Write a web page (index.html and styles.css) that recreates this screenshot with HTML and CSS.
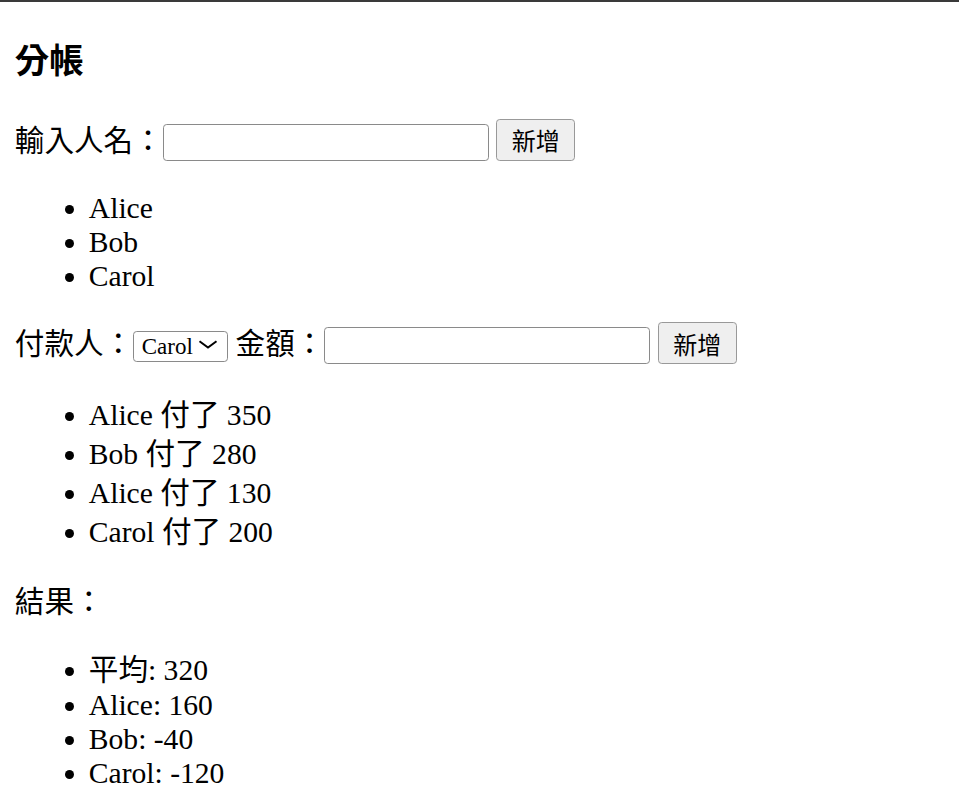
FILE: index.html
```html
<!DOCTYPE html>
<html lang="zh-Hant">
<head>
    <meta charset="UTF-8">
    <meta name="viewport" content="width=device-width, initial-scale=1.0">
    <title>分帳</title>
    <link rel="stylesheet" href="styles.css">
</head>
<body>
    <h3 class="title">分帳</h3>

    <!-- People -->
    <div class="row">輸入人名：<input type="text" class="field"> <button class="btn">新增</button></div>
    <ul class="list">
        <li>Alice</li>
        <li>Bob</li>
        <li>Carol</li>
    </ul>

    <!-- Payments -->
    <div class="row">付款人：<span class="select-wrap"><select class="picker">
            <option>Alice</option>
            <option>Bob</option>
            <option selected>Carol</option>
        </select><svg class="chevron" width="20" height="9" viewBox="0 0 20 9"><path d="M1.5 1.2 L10 7.6 L18.5 1.2" fill="none" stroke="#000" stroke-width="2"/></svg></span> 金額：<input type="number" class="field"> <button class="btn">新增</button></div>
    <ul class="list payments">
        <li>Alice 付了 350</li>
        <li>Bob 付了 280</li>
        <li>Alice 付了 130</li>
        <li>Carol 付了 200</li>
    </ul>

    <!-- Result -->
    <div class="result">結果：</div>
    <ul class="list results">
        <li class="avg">平均: 320</li>
        <li>Alice: 160</li>
        <li>Bob: -40</li>
        <li>Carol: -120</li>
    </ul>
</body>
</html>
```

FILE: styles.css
```css
html {
    border-top: 2px solid #3a3a3a;
}
body {
    margin: 0 14.8px 14.8px;
    font-family: "Liberation Serif", "Noto Sans CJK TC", serif;
    font-size: 29.6px;
    line-height: 34px;
    color: #000;
    background: white;
}
.title {
    font-size: 34.6px;
    line-height: 46px;
    margin: 36.4px 0 34.6px;
}
.row {
    margin: 0;
}
.field {
    width: 326px;
    height: 37px;
    box-sizing: border-box;
    padding: 1.8px 3.7px;
    border: 1.5px solid #8a8a8a;
    border-radius: 3.7px;
    font-size: 24.7px;
    font-family: "Liberation Sans", "Noto Sans CJK TC", sans-serif;
    -moz-appearance: textfield;
}
.field::-webkit-inner-spin-button,
.field::-webkit-outer-spin-button {
    -webkit-appearance: none;
    margin: 0;
}
.btn {
    height: 42px;
    width: 79px;
    padding: 0;
    border: 1.5px solid #999;
    border-radius: 3.7px;
    background: #efefef;
    color: #000;
    font-size: 24px;
    line-height: normal;
    font-family: "Noto Sans CJK TC", sans-serif;
    cursor: pointer;
}
/* select with drawn chevron */
.select-wrap {
    position: relative;
    display: inline-block;
}
.picker {
    -webkit-appearance: none;
    appearance: none;
    width: 95px;
    height: 31px;
    padding: 0 0 0 7.5px;
    font-size: 23px;
    font-family: "Liberation Serif", serif;
    border: 1.5px solid #8a8a8a;
    border-radius: 3.7px;
    background: white;
    color: #000;
}
.chevron {
    position: absolute;
    right: 10px;
    top: 50%;
    margin-top: -4px;
    pointer-events: none;
}
.list {
    margin: 29.6px 0;
    padding-left: 74px;
}
.list.payments {
    margin-top: 31.6px;
}
.list.results {
    margin-top: 27.6px;
}
.payments li {
    line-height: 39px;
}
.list .avg {
    line-height: 36px;
}
.result {
    margin: 0;
    line-height: 43px;
}
```
